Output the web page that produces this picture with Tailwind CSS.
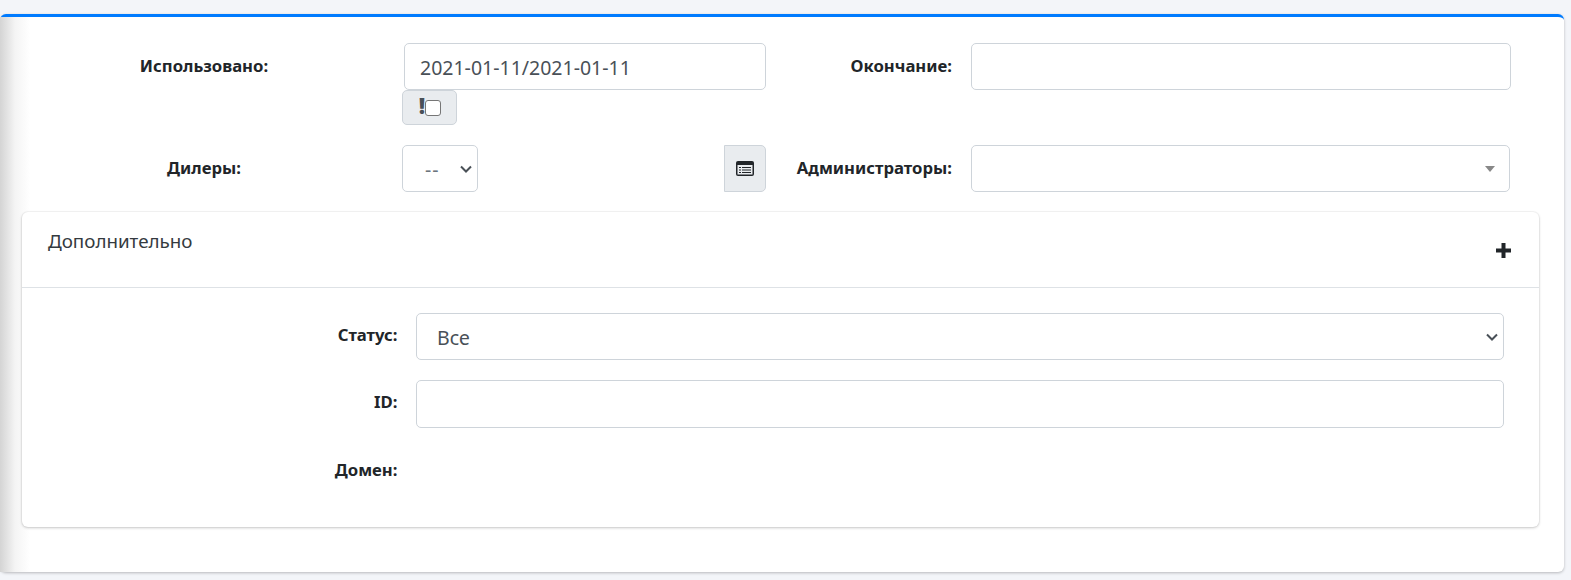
<!DOCTYPE html>
<html lang="ru">

<head>
    <meta charset="UTF-8">
    <title>Фильтр</title>
    <script src="https://cdn.jsdelivr.net/npm/@tailwindcss/browser@4"></script>
</head>

<body class="w-[1571px] h-[580px] overflow-hidden bg-[#f3f5f9] font-['Noto_Sans','Open_Sans',sans-serif] text-[#212529]">
    <div class="relative mt-[14px] w-[1564px] h-[558px] bg-white border-t-[3px] border-[#007bff] rounded-[6px] shadow-[0_1px_3px_rgba(0,0,0,0.25)]">
        <div class="absolute left-0 top-0 bottom-0 w-[30px] bg-gradient-to-r from-[#d4d4d4] via-[#f4f4f4] via-50% to-white/0"></div>

        <!-- first row -->
        <div class="relative flex pl-[22px] pt-[26px]">
            <label class="w-[364px] pt-[11px] text-center text-[16.7px] leading-[24px] font-bold">Использовано:</label>
            <div class="w-[362px] ml-[18px]">
                <input readonly value="2021-01-11/2021-01-11"
                    class="w-full h-[47px] px-[15px] pt-[2px] text-[19.5px] text-[#495057] bg-white border border-[#ced4da] rounded-[5px]">
                <button class="flex items-center justify-center -ml-[2px] w-[55px] h-[35px] pl-[1px] bg-[#e9ecef] border border-[#ced4da] rounded-[5px]">
                    <span class="text-[22px] leading-none font-black text-[#495057] -mt-[6px]">!</span>
                    <span class="block w-[16px] h-[16px] bg-white border border-[#767676] rounded-[3px]"></span>
                </button>
            </div>
            <label class="w-[186px] pt-[11px] text-right text-[16.7px] leading-[24px] font-bold">Окончание:</label>
            <input class="w-[540px] h-[47px] ml-[19px] bg-white border border-[#ced4da] rounded-[5px]">
        </div>

        <!-- second row -->
        <div class="relative flex pl-[22px] mt-[20px]">
            <label class="w-[364px] pt-[11px] text-center text-[16.7px] leading-[24px] font-bold">Дилеры:</label>
            <div class="flex justify-between w-[364px] ml-[16px]">
                <div class="flex items-center justify-between w-[76px] h-[47px] pl-[22px] pr-[5px] border border-[#ced4da] rounded-[5px] text-[19.5px] tracking-[1px] text-[#6c757d]">
                    <span class="mt-[2px]">--</span>
                    <svg width="12" height="8" viewBox="0 0 12 8" fill="none" stroke="#495057" stroke-width="2"><path d="M1 1.500 6 6.500l5-5" /></svg>
                </div>
                <button class="flex items-center justify-center w-[42px] h-[47px] bg-[#e9ecef] border border-[#ced4da] rounded-r-[5px]">
                    <svg width="18" height="15" viewBox="0 0 18 15">
                        <rect width="18" height="15" rx="2" fill="#212529" />
                        <rect x="1.500" y="4" width="15" height="9.500" fill="#e9ecef" />
                        <path d="M3 6h2v1H3zM6 6h9v1H6zM3 8.500h2v1H3zM6 8.500h9v1H6zM3 11h2v1H3zM6 11h9v1H6z" fill="#212529" />
                    </svg>
                </button>
            </div>
            <label class="w-[186px] pt-[11px] text-right text-[16.7px] leading-[24px] font-bold">Администраторы:</label>
            <div class="flex items-center justify-end w-[539px] h-[47px] ml-[19px] pr-[14px] border border-[#ced4da] rounded-[5px]">
                <span class="block w-0 h-0 border-x-[5px] border-x-transparent border-t-[6px] border-t-[#888888]"></span>
            </div>
        </div>

        <!-- extra block -->
        <div class="relative ml-[22px] mt-[20px] w-[1517px] h-[315px] bg-white rounded-[6px] shadow-[0_1px_3px_rgba(0,0,0,0.2),0_0_0_1px_rgba(0,0,0,0.03)]">
            <div class="flex justify-between h-[76px] pl-[26px] pr-[28px] border-b border-[#dee2e6]">
                <h3 class="pt-[17px] text-[18.800px] leading-[24px] text-[#343a40]">Дополнительно</h3>
                <svg class="mt-[31px]" width="15" height="15" viewBox="0 0 15 15"><path d="M5.500 0h4v5.500H15v4H9.500V15h-4V9.500H0v-4h5.500z" fill="#212529" /></svg>
            </div>
            <div class="flex flex-col pt-[25px]">
                <div class="flex">
                    <label class="w-[375.5px] pt-[10px] text-right text-[16.7px] leading-[24px] font-bold">Статус:</label>
                    <div class="flex items-center justify-between w-[1088px] h-[47px] ml-[18.5px] pl-[20px] pr-[5px] border border-[#ced4da] rounded-[5px] text-[19.5px] text-[#495057]">
                        <span class="mt-[2px]">Все</span>
                        <svg width="12" height="8" viewBox="0 0 12 8" fill="none" stroke="#495057" stroke-width="2"><path d="M1 1.500 6 6.500l5-5" /></svg>
                    </div>
                </div>
                <div class="flex mt-[20px]">
                    <label class="w-[375.5px] pt-[10px] text-right text-[16.7px] leading-[24px] font-bold">ID:</label>
                    <input class="w-[1088px] h-[48px] ml-[18.5px] bg-white border border-[#ced4da] rounded-[5px]">
                </div>
                <div class="flex mt-[30px]">
                    <label class="w-[375.5px] text-right text-[16.7px] leading-[24px] font-bold">Домен:</label>
                </div>
            </div>
        </div>
    </div>
</body>

</html>
